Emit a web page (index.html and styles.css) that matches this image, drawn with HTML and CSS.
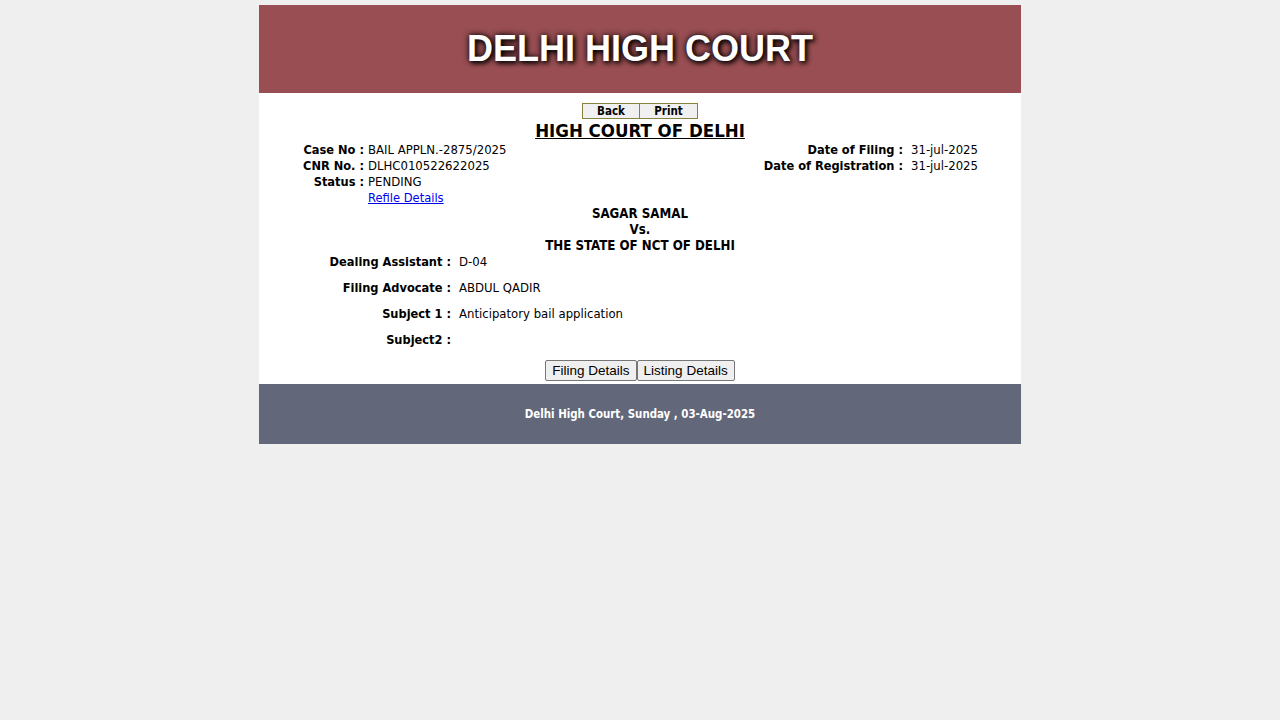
FILE: index.html
```html
<!DOCTYPE html>
<html lang="en">
<head>
<meta charset="utf-8">
<title>Delhi High Court - Case Status</title>
<link rel="stylesheet" href="styles.css">
</head>
<body>
<div class="page">
  <header class="banner">
    <h1 class="banner-title">DELHI HIGH COURT</h1>
  </header>
  <main class="content">
    <div class="nav-buttons">
      <button class="nav-btn" type="button">Back</button><button class="nav-btn" type="button">Print</button>
    </div>
    <h2 class="court-title">HIGH COURT OF DELHI</h2>
    <div class="case-info">
      <div class="info-left">
        <span class="lbl">Case No :</span><span class="val">BAIL APPLN.-2875/2025</span>
        <span class="lbl">CNR No. :</span><span class="val">DLHC010522622025</span>
        <span class="lbl">Status :</span><span class="val">PENDING</span>
        <span class="lbl"></span><span class="val"><a href="#" class="refile">Refile Details</a></span>
      </div>
      <div class="info-right">
        <span class="lbl">Date of Filing :</span><span class="val">31-jul-2025</span>
        <span class="lbl">Date of Registration :</span><span class="val">31-jul-2025</span>
      </div>
    </div>
    <div class="parties">
      <div>SAGAR SAMAL</div>
      <div>Vs.</div>
      <div>THE STATE OF NCT OF DELHI</div>
    </div>
    <div class="details">
      <span class="lbl">Dealing Assistant :</span><span class="val">D-04</span>
      <span class="lbl">Filing Advocate :</span><span class="val">ABDUL QADIR</span>
      <span class="lbl">Subject 1 :</span><span class="val">Anticipatory bail application</span>
      <span class="lbl">Subject2 :</span><span class="val"></span>
    </div>
    <div class="action-buttons">
      <button class="action-btn" type="button">Filing Details</button><button class="action-btn" type="button">Listing Details</button>
    </div>
  </main>
  <footer class="footer">
    <p class="footer-text">Delhi High Court, Sunday , 03-Aug-2025</p>
  </footer>
</div>
</body>
</html>
```

FILE: styles.css
```css
html, body {
  margin: 0;
  padding: 0;
}
body {
  background: #efefef;
  font-family: "DejaVu Sans Condensed", "DejaVu Sans", sans-serif;
  font-stretch: condensed;
  color: #000;
}
.page {
  width: 762px;
  margin: 5px auto 0;
}
.banner {
  background: #984e52;
  height: 88px;
  display: flex;
  align-items: center;
  justify-content: center;
}
.banner-title {
  margin: 0;
  font-family: "Liberation Sans", Arial, sans-serif;
  font-stretch: normal;
  font-size: 36px;
  font-weight: bold;
  color: #fff;
  text-shadow: 0 0 6px #000, 2px 2px 5px #000;
  line-height: 40px;
}
.content {
  background: #fff;
  padding: 10px 0 3px;
}
.nav-buttons {
  display: flex;
  justify-content: center;
}
.nav-btn {
  width: 58px;
  height: 16px;
  margin: 0;
  padding: 0;
  border: 1px solid #86823f;
  background: #f0f0f0;
  font-family: inherit;
  font-stretch: condensed;
  font-weight: bold;
  font-size: 11.5px;
  line-height: 14px;
  color: #000;
}
.nav-btn + .nav-btn {
  border-left: none;
}
.court-title {
  margin: 0;
  text-align: center;
  font-size: 18.5px;
  font-weight: bold;
  text-decoration: underline;
  line-height: 23px;
}
.case-info {
  display: flex;
  justify-content: space-between;
  align-items: flex-start;
  font-size: 13px;
  line-height: 16px;
}
.info-left {
  display: grid;
  grid-template-columns: 105px auto;
  column-gap: 4px;
}
.info-right {
  display: grid;
  grid-template-columns: auto auto;
  column-gap: 8px;
  margin-right: 43px;
}
.lbl {
  font-weight: bold;
  font-size: 12.7px;
  text-align: right;
}
.refile {
  color: #0000ee;
  text-decoration: underline;
  font-size: 12.8px;
}
.parties {
  text-align: center;
  font-weight: bold;
  font-size: 13.2px;
  line-height: 16px;
}
.details {
  display: grid;
  grid-template-columns: 192px auto;
  column-gap: 8px;
  row-gap: 10px;
  font-size: 13px;
  line-height: 16px;
}
.action-buttons {
  display: flex;
  justify-content: center;
  margin-top: 12px;
}
.action-btn {
  height: 21px;
  margin: 0;
  padding: 0 6px;
  border: 1px solid #767676;
  border-radius: 2px;
  background: #efefef;
  font-family: "Liberation Sans", Arial, sans-serif;
  font-stretch: normal;
  font-size: 13.5px;
  color: #000;
}
.footer {
  background: #62677a;
  height: 60px;
  display: flex;
  align-items: center;
  justify-content: center;
}
.footer-text {
  margin: 0;
  color: #fff;
  font-weight: bold;
  font-size: 11.4px;
}
```
